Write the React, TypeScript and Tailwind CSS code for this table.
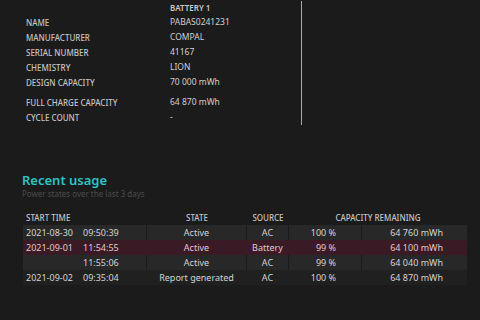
import React from 'react';

type Info = { label: string; value: string; gap?: boolean };

const info: Info[] = [
  { label: 'Name', value: 'PABAS0241231' },
  { label: 'Manufacturer', value: 'COMPAL' },
  { label: 'Serial number', value: '41167' },
  { label: 'Chemistry', value: 'LION' },
  { label: 'Design capacity', value: '70 000 mWh' },
  { label: 'Full charge capacity', value: '64 870 mWh', gap: true },
  { label: 'Cycle count', value: '-' },
];

type Usage = {
  date: string;
  time: string;
  state: string;
  source: string;
  pct: string;
  cap: string;
  kind: 'ac' | 'battery' | 'report';
};

const usage: Usage[] = [
  { date: '2021-08-30', time: '09:50:39', state: 'Active', source: 'AC', pct: '100 %', cap: '64 760 mWh', kind: 'ac' },
  { date: '2021-09-01', time: '11:54:55', state: 'Active', source: 'Battery', pct: '99 %', cap: '64 100 mWh', kind: 'battery' },
  { date: '', time: '11:55:06', state: 'Active', source: 'AC', pct: '99 %', cap: '64 040 mWh', kind: 'ac' },
  { date: '2021-09-02', time: '09:35:04', state: 'Report generated', source: 'AC', pct: '100 %', cap: '64 870 mWh', kind: 'report' },
];

const rowBg = {
  ac: 'bg-[#282828] text-[#d4d4d4]',
  battery: 'bg-[#3a1a25] text-[#e0c8d0]',
  report: 'bg-[#202020] text-[#d4d4d4]',
};

const cellBorder = {
  ac: 'border-[#1b1b1b]',
  battery: 'border-[#3a1a25]',
  report: 'border-[#202020]',
};

export default function App() {
  return (
    <div className="w-[480px] h-[320px] overflow-hidden bg-[#1b1b1b] font-['Noto_Sans',sans-serif]">
      {/* battery info */}
      <div className="mt-px w-[302px] h-[124px] border-r border-[#a8a8a8] pl-[26px]">
        <div className="flex h-[14px] items-center">
          <div className="w-[144px]" />
          <div className="text-[8px] font-semibold uppercase text-[#c8c8c8]">Battery 1</div>
        </div>
        {info.map((r) => (
          <div key={r.label} className={`flex h-[15px] items-center ${r.gap ? 'mt-[5px]' : ''}`}>
            <div className="w-[144px] text-[8px] font-medium uppercase text-[#c4c4c4]">{r.label}</div>
            <div className="text-[8.5px] text-[#d0d0d0]">{r.value}</div>
          </div>
        ))}
      </div>

      {/* recent usage */}
      <div className="mt-[47px] pl-[22px]">
        <div className="text-[13px] font-semibold leading-[16px] text-[#2ec4c4]">Recent usage</div>
        <div className="text-[8px] leading-[12px] text-[#4c4c4c]">Power states over the last 3 days</div>
      </div>

      <div className="mt-[10px] ml-[23px] w-[444px]">
        <div className="flex h-[15px] items-center text-[8px] font-medium uppercase text-[#c4c4c4]">
          <div className="w-[124px] pl-[3px]">Start time</div>
          <div className="w-[100px] text-center">State</div>
          <div className="w-[42px] text-center">Source</div>
          <div className="flex-1 text-center">Capacity remaining</div>
        </div>
        {usage.map((u, i) => (
          <div key={i} className={`flex h-[15px] items-center text-[9px] ${rowBg[u.kind]}`}>
            <div className={`flex h-full w-[124px] items-center border-r pl-[3px] ${cellBorder[u.kind]}`}>
              <span className="w-[57px]">{u.date}</span>
              <span>{u.time}</span>
            </div>
            <div className={`flex h-full w-[100px] items-center justify-center border-r ${cellBorder[u.kind]}`}>{u.state}</div>
            <div className={`flex h-full w-[42px] items-center justify-center border-r ${cellBorder[u.kind]}`}>{u.source}</div>
            <div className={`flex h-full w-[73px] items-center justify-end border-r pr-[25px] ${cellBorder[u.kind]}`}>{u.pct}</div>
            <div className="flex h-full flex-1 items-center justify-end pr-[24px]">{u.cap}</div>
          </div>
        ))}
      </div>
    </div>
  );
}
